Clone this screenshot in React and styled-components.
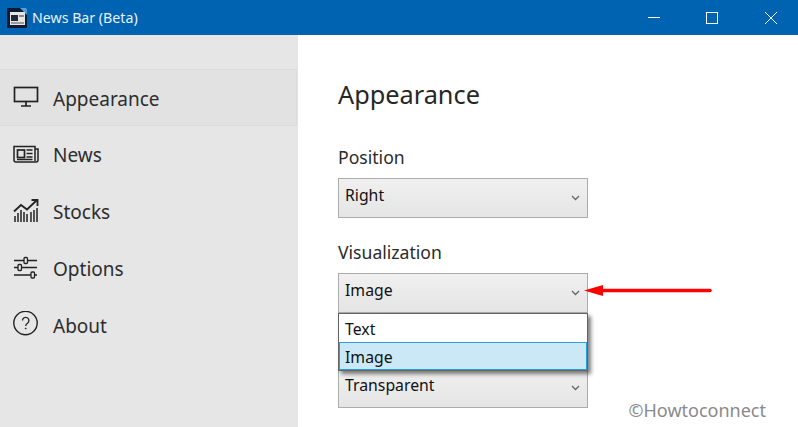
import React from "react";
import styled, { createGlobalStyle } from "styled-components";

const GlobalStyle = createGlobalStyle`
  html, body {
    margin: 0;
    height: 100%;
    overflow: hidden;
    background: #fff;
    font-family: "Noto Sans", "Open Sans", sans-serif;
  }
`;

const Window = styled.div`
  position: relative;
  width: 798px;
  height: 427px;
  display: flex;
  flex-direction: column;
  overflow: hidden;
`;

const TitleBar = styled.header`
  height: 35px;
  flex: none;
  background: #0063b1;
  display: flex;
  align-items: center;
  padding-left: 7px;
  color: #fff;
  overflow: hidden;
`;

const AppTitle = styled.span`
  margin-left: 5px;
  font-size: 14.2px;
  color: #e8f1f8;
`;

const Controls = styled.div`
  margin-left: auto;
  margin-right: -2px;
  display: flex;
`;

const ControlButton = styled.div`
  width: 58.5px;
  height: 35px;
  display: flex;
  align-items: center;
  justify-content: center;
`;

const Body = styled.div`
  flex: 1;
  display: flex;
  min-height: 0;
`;

const Sidebar = styled.nav`
  width: 298px;
  flex: none;
  background: #e6e6e6;
  padding-top: 34px;
  box-sizing: border-box;
`;

const NavItem = styled.div`
  height: 56.75px;
  box-sizing: border-box;
  margin-right: 1px;
  display: flex;
  align-items: center;
  padding-left: 13px;
  gap: 14px;
  color: #2d2d2d;
  font-size: 19px;
  border: 1px solid ${(p) => (p.$active ? "#dcdcdc" : "transparent")};
  border-left: 0;
  background: ${(p) => (p.$active ? "#e2e2e2" : "transparent")};
`;

const NavLabel = styled.span`
  padding-top: 2.6px;
`;

const NavIcon = styled.svg`
  width: 26px;
  height: 26px;
  flex: none;
  fill: none;
  stroke: #222;
`;

const Main = styled.main`
  flex: 1;
  padding: 39px 0 0 40px;
  color: #2b2b2b;
`;

const Heading = styled.h1`
  margin: 0 0 33px;
  font-size: 25.3px;
  font-weight: 400;
  line-height: 40px;
  color: #262626;
`;

const Field = styled.div`
  position: relative;
  width: 250px;
  margin-bottom: 24px;
`;

const Label = styled.div`
  height: 31px;
  font-size: 17.6px;
  line-height: 21px;
`;

const Select = styled.div`
  height: 40px;
  box-sizing: border-box;
  border: 1px solid #acacac;
  background: linear-gradient(#f0f0f0, #e5e5e5);
  display: flex;
  align-items: center;
  justify-content: space-between;
  padding: 0 7px 6px 6px;
  font-size: 15.8px;
  color: #111;
`;

const Chevron = styled.svg`
  width: 9px;
  height: 6px;
  margin-top: 6px;
  fill: none;
  stroke: #666;
  stroke-width: 1.3;
`;

const Popup = styled.div`
  position: absolute;
  top: 71px;
  left: 0;
  width: 250px;
  height: 58px;
  box-sizing: border-box;
  border: 1px solid #646464;
  background: #fff;
  box-shadow: 3px 3px 4px rgba(0, 0, 0, 0.5);
  z-index: 2;
`;

const Option = styled.div`
  height: 28px;
  box-sizing: border-box;
  padding: 2px 0 0 5px;
  display: flex;
  align-items: center;
  font-size: 15.8px;
  color: #111;
  border: 1px solid ${(p) => (p.$selected ? "#26a0da" : "transparent")};
  background: ${(p) => (p.$selected ? "#cbe8f6" : "transparent")};
`;

const Arrow = styled.svg`
  position: absolute;
  left: 584px;
  top: 283px;
  width: 130px;
  height: 16px;
  z-index: 3;
`;

const Watermark = styled.div`
  position: absolute;
  right: 32px;
  bottom: 5px;
  font-size: 18px;
  color: #8a8a8a;
  z-index: 3;
`;

const AppIcon = () => (
  <svg width="20" height="20" viewBox="0 0 20 20">
    <rect width="20" height="20" rx="1" fill="#0e1a33" />
    <path d="M13 0h6l1 1v6z" fill="#4aa3e0" />
    <rect x="3" y="4" width="15" height="13" fill="#e6e6e6" />
    <rect x="4" y="7" width="7" height="6" fill="#20283a" />
    <rect x="12" y="7" width="5" height="2" fill="#8c8c8c" />
    <rect x="4" y="14" width="13" height="2" fill="#9a9a9a" />
  </svg>
);

const MonitorIcon = () => (
  <NavIcon viewBox="0 0 26 26">
    <rect x="1.5" y="3.500" width="23" height="14" strokeWidth="1.700" />
    <path d="M13 18v3.500M8 22h10" strokeWidth="1.700" />
  </NavIcon>
);

const NewsIcon = () => (
  <NavIcon viewBox="0 0 26 26">
    <path d="M22 8h3v11a2 2 0 0 1-2 2H3a2 2 0 0 1-2-2V5.500h21V20" strokeWidth="1.500" />
    <rect x="4.500" y="9" width="7" height="7.500" strokeWidth="1.700" />
    <path d="M13.500 9h6M13.500 12.500h6M13.500 16h6M4 18.500h15.500" strokeWidth="1.300" />
  </NavIcon>
);

const StocksIcon = () => (
  <NavIcon viewBox="0 0 26 26">
    <path d="M1 13.500l7-6.500 6 4.500L24 2" strokeWidth="1.800" />
    <path d="M18.500 2h6v6" strokeWidth="1.800" />
    <path
      d="M2 24v-6M5 24v-9M8 24v-12M11 24v-10M14 24v-8M18 24v-10M21 24v-12M24 24v-14"
      strokeWidth="1.500"
    />
  </NavIcon>
);

const OptionsIcon = () => (
  <NavIcon viewBox="0 0 26 26">
    <path d="M1 5.500h10M15 5.500h9M1 12.500h4M9 12.500h15M1 20h17M22 20h2" strokeWidth="1.400" />
    <rect x="11" y="2.500" width="3.500" height="6" rx="1" strokeWidth="1.300" />
    <rect x="5" y="9.500" width="3.500" height="6" rx="1" strokeWidth="1.300" />
    <rect x="18" y="17" width="3.500" height="6" rx="1" strokeWidth="1.300" />
  </NavIcon>
);

const AboutIcon = () => (
  <NavIcon viewBox="0 0 26 26">
    <circle cx="12.500" cy="12" r="11.700" strokeWidth="1.400" />
    <path d="M9.500 9.500a3.200 3.200 0 1 1 5 2.700c-1.200.8-1.800 1.300-1.800 2.800" strokeWidth="1.300" />
    <circle cx="12.700" cy="17.500" r="0.500" fill="#222" strokeWidth="0.800" />
  </NavIcon>
);

const SelectChevron = () => (
  <Chevron viewBox="0 0 9 6">
    <path d="M1 1l3.500 3.500L8 1" />
  </Chevron>
);

const navItems = [
  { label: "Appearance", Icon: MonitorIcon, active: true },
  { label: "News", Icon: NewsIcon },
  { label: "Stocks", Icon: StocksIcon },
  { label: "Options", Icon: OptionsIcon },
  { label: "About", Icon: AboutIcon },
];

export default function App() {
  return (
    <Window>
      <GlobalStyle />
      <TitleBar>
        <AppIcon />
        <AppTitle>News Bar (Beta)</AppTitle>
        <Controls>
          <ControlButton>
            <svg width="12" height="12" viewBox="0 0 12 12" stroke="#fff" fill="none">
              <path d="M0 5.500h12" />
            </svg>
          </ControlButton>
          <ControlButton>
            <svg width="12" height="12" viewBox="0 0 12 12" stroke="#fff" fill="none">
              <rect x="0.500" y="0.500" width="11" height="11" />
            </svg>
          </ControlButton>
          <ControlButton>
            <svg width="12" height="12" viewBox="0 0 12 12" stroke="#fff" fill="none">
              <path d="M0 0l12 12M12 0L0 12" />
            </svg>
          </ControlButton>
        </Controls>
      </TitleBar>
      <Body>
        <Sidebar>
          {navItems.map(({ label, Icon, active }) => (
            <NavItem key={label} $active={active}>
              <Icon />
              <NavLabel>{label}</NavLabel>
            </NavItem>
          ))}
        </Sidebar>
        <Main>
          <Heading>Appearance</Heading>
          <Field>
            <Label>Position</Label>
            <Select>
              Right
              <SelectChevron />
            </Select>
          </Field>
          <Field>
            <Label>Visualization</Label>
            <Select>
              Image
              <SelectChevron />
            </Select>
            <Popup>
              <Option>Text</Option>
              <Option $selected>Image</Option>
            </Popup>
          </Field>
          <Field>
            <Label />
            <Select>
              Transparent
              <SelectChevron />
            </Select>
          </Field>
        </Main>
      </Body>
      <Arrow viewBox="0 0 130 16">
        <path d="M17 7.500h109" stroke="#ff0000" strokeWidth="3.500" strokeLinecap="round" />
        <path d="M0 7.500l19-5.500v11z" fill="#ff0000" />
      </Arrow>
      <Watermark>©Howtoconnect</Watermark>
    </Window>
  );
}
